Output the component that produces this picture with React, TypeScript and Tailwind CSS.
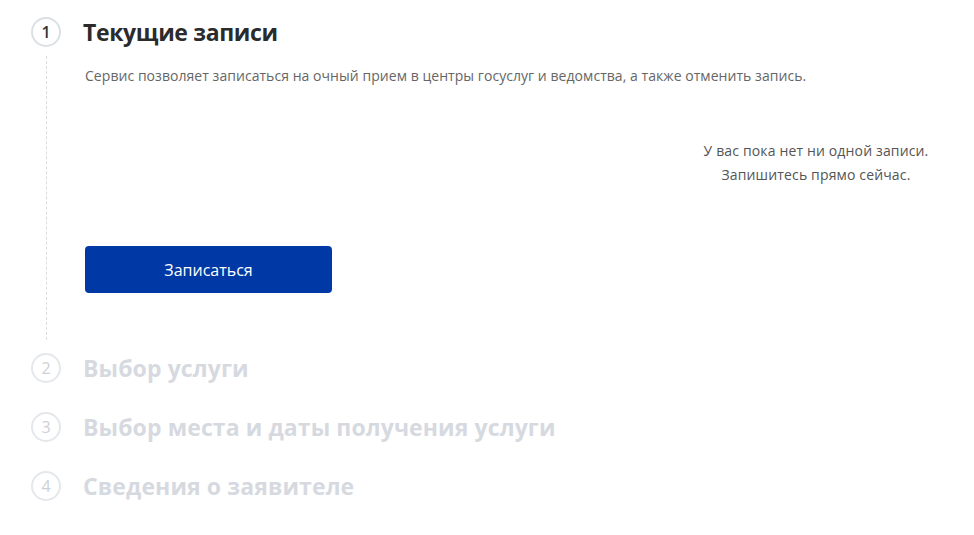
const STEPS = [
  { n: 2, title: "Выбор услуги" },
  { n: 3, title: "Выбор места и даты получения услуги" },
  { n: 4, title: "Сведения о заявителе" },
];

function StepCircle({ n, active }: { n: number; active?: boolean }) {
  return (
    <div
      className={
        active
          ? "w-[30px] h-[30px] rounded-full border-2 border-[#dcdfe3] flex items-center justify-center text-[16px] font-semibold text-[#333]"
          : "w-[30px] h-[30px] rounded-full border-2 border-[#e4e7eb] flex items-center justify-center text-[16px] text-[#ccd1d7]"
      }
    >
      {n}
    </div>
  );
}

export default function App() {
  return (
    <div
      className="w-[974px] h-[535px] bg-white overflow-hidden pl-[31px] pt-[17px]"
      style={{ fontFamily: '"Open Sans", "Noto Sans", sans-serif' }}
    >
      {/* Step 1 */}
      <div className="flex items-center gap-[22px] h-[30px]">
        <StepCircle n={1} active />
        <h2 className="text-[23px] font-bold text-[#2b2b2b] leading-none tracking-[-0.35px]">Текущие записи</h2>
      </div>

      <div className="ml-[15px] mt-[9px] border-l border-dashed border-[#d9dce0] pl-[38px] pt-[10px] pb-[47px]">
        <p className="text-[14px] leading-[20px] text-[#666] tracking-[0.05px]">
          Сервис позволяет записаться на очный прием в центры госуслуг и ведомства, а также отменить запись.
        </p>

        <div className="flex justify-end pr-[28px] mt-[53px]">
          <div className="w-[260px] text-center text-[14px] leading-[24px] text-[#555] tracking-[0.15px]">
            <div>У вас пока нет ни одной записи.</div>
            <div>Запишитесь прямо сейчас.</div>
          </div>
        </div>

        <button className="mt-[59px] w-[247px] h-[47px] rounded-[4px] bg-[#0039a6] text-white text-[16px]">
          Записаться
        </button>
      </div>

      {/* Remaining steps */}
      <div className="flex flex-col gap-[29px] mt-[13px]">
        {STEPS.map((s) => (
          <div key={s.n} className="flex items-center gap-[22px] h-[30px]">
            <StepCircle n={s.n} />
            <h2 className="text-[23px] font-bold text-[#d6dae0] leading-none tracking-[0.1px]">{s.title}</h2>
          </div>
        ))}
      </div>
    </div>
  );
}
